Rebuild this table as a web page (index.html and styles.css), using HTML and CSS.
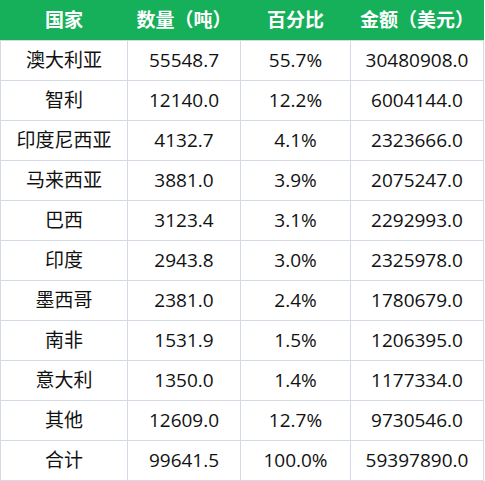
FILE: index.html
```html
<!DOCTYPE html>
<html lang="zh">
<head>
<meta charset="utf-8">
<link rel="stylesheet" href="styles.css">
</head>
<body>
<div class="sheet">
  <div class="head">
    <div>国家</div><div>数量（吨）</div><div>百分比</div><div>金额（美元）</div>
  </div>
  <div class="body">
    <div>澳大利亚</div><div>55548.7</div><div>55.7%</div><div>30480908.0</div>
    <div>智利</div><div>12140.0</div><div>12.2%</div><div>6004144.0</div>
    <div>印度尼西亚</div><div>4132.7</div><div>4.1%</div><div>2323666.0</div>
    <div>马来西亚</div><div>3881.0</div><div>3.9%</div><div>2075247.0</div>
    <div>巴西</div><div>3123.4</div><div>3.1%</div><div>2292993.0</div>
    <div>印度</div><div>2943.8</div><div>3.0%</div><div>2325978.0</div>
    <div>墨西哥</div><div>2381.0</div><div>2.4%</div><div>1780679.0</div>
    <div>南非</div><div>1531.9</div><div>1.5%</div><div>1206395.0</div>
    <div>意大利</div><div>1350.0</div><div>1.4%</div><div>1177334.0</div>
    <div>其他</div><div>12609.0</div><div>12.7%</div><div>9730546.0</div>
    <div>合计</div><div>99641.5</div><div>100.0%</div><div>59397890.0</div>
  </div>
</div>
</body>
</html>
```
FILE: styles.css
```css
html, body {
  margin: 0;
  padding: 0;
  background: #ffffff;
}
.sheet {
  width: 484px;
  font-family: "Open Sans", "Noto Sans CJK SC", sans-serif;
}
.head, .body {
  display: grid;
  grid-template-columns: 126px 112px 109px 132px;
  column-gap: 1px;
  padding: 0 1px;
}
.head {
  background: #17b05a;
  height: 40px;
  grid-template-rows: 40px;
}
.head div {
  color: #ffffff;
  font-weight: 700;
  font-size: 19px;
  display: flex;
  align-items: center;
  justify-content: center;
  line-height: 1;
}
.body {
  background: #d3dae6;
  grid-auto-rows: 39px;
  row-gap: 1px;
  padding: 1px;
}
.body div {
  background: #ffffff;
  color: #111111;
  font-size: 19px;
  display: flex;
  align-items: center;
  justify-content: center;
  line-height: 1;
}
```
